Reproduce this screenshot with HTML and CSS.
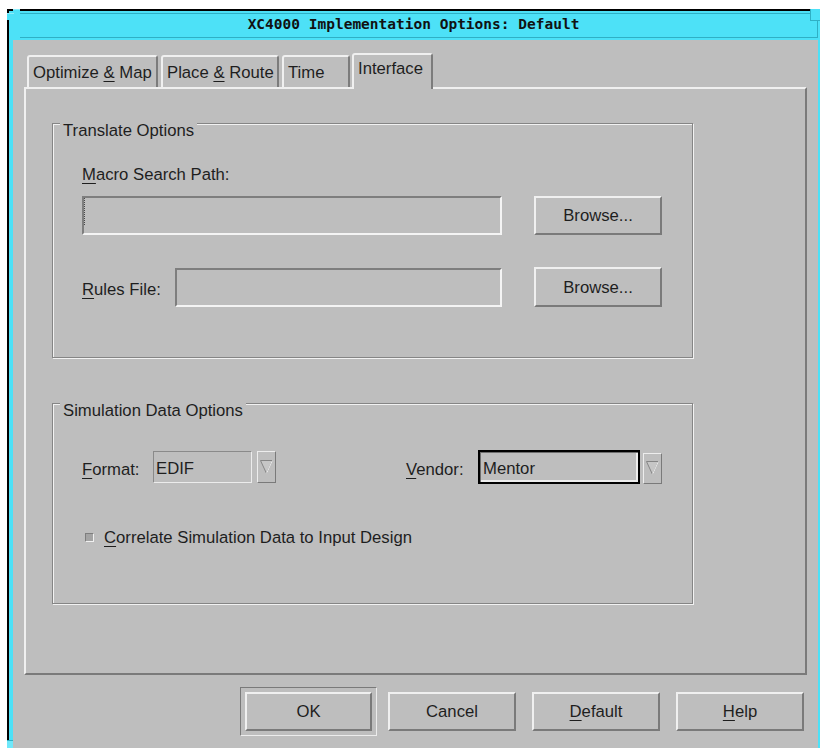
FILE: index.html
```html
<!DOCTYPE html>
<html lang="en">
<head>
<meta charset="utf-8">
<title>XC4000 Implementation Options: Default</title>
<link rel="stylesheet" href="styles.css">
</head>
<body>
<div class="window">
  <span class="corner corner-tl"></span>
  <span class="corner corner-tr"></span>
  <span class="corner corner-bl"></span>

  <div class="titlebar">
    <div class="caption">XC4000 Implementation Options: Default</div>
  </div>

  <div class="client">
    <div class="notebook">
      <div class="tabs">
        <div class="tab tab-opt">Optimize <u>&amp;</u> Map</div>
        <div class="tab tab-par">Place <u>&amp;</u> Route</div>
        <div class="tab tab-time">Time</div>
        <div class="tab tab-if active">Interface</div>
      </div>

      <div class="page">
        <div class="group group-translate">
          <div class="group-title">Translate Options</div>
          <div class="macro-label"><u>M</u>acro Search Path:</div>
          <div class="row row-macro">
            <div class="field field-macro"><span class="cursor"></span></div>
            <div class="button browse">Browse...</div>
          </div>
          <div class="row row-rules">
            <div class="rules-label"><u>R</u>ules File:</div>
            <div class="field field-rules"></div>
            <div class="button browse browse-rules">Browse...</div>
          </div>
        </div>

        <div class="group group-sim">
          <div class="group-title">Simulation Data Options</div>
          <div class="row row-format">
            <div class="combo">
              <div class="combo-label format-label"><u>F</u>ormat:</div>
              <div class="combo-field format-field">EDIF</div>
              <div class="arrow-btn format-arrow">
                <svg width="13" height="14" viewBox="0 0 13 14"><polygon points="0.5,0.5 12.5,0.5 6.5,13.5" fill="#c6c6c6" stroke="#858585"/><polyline points="12.5,0.5 6.5,13.5" fill="none" stroke="#efefef"/></svg>
              </div>
            </div>
            <div class="combo">
              <div class="combo-label vendor-label"><u>V</u>endor:</div>
              <div class="combo-field vendor-field">Mentor</div>
              <div class="arrow-btn vendor-arrow">
                <svg width="13" height="14" viewBox="0 0 13 14"><polygon points="0.5,0.5 12.5,0.5 6.5,13.5" fill="#c6c6c6" stroke="#858585"/><polyline points="12.5,0.5 6.5,13.5" fill="none" stroke="#efefef"/></svg>
              </div>
            </div>
          </div>
          <div class="row row-check">
            <span class="check"></span>
            <span class="check-label"><u>C</u>orrelate Simulation Data to Input Design</span>
          </div>
        </div>
      </div>
    </div>

    <div class="actions">
      <div class="default-ring"><div class="button action ok">OK</div></div>
      <div class="button action">Cancel</div>
      <div class="button action"><span><u>D</u>efault</span></div>
      <div class="button action"><span><u>H</u>elp</span></div>
    </div>
  </div>
</div>
</body>
</html>
```

FILE: styles.css
```css
* {
  box-sizing: border-box;
}

html,
body {
  margin: 0;
  padding: 0;
}

body {
  width: 820px;
  height: 748px;
  overflow: hidden;
  background: #ffffff;
  font-family: "Liberation Sans", Arial, sans-serif;
  font-size: 16.7px;
  line-height: 19px;
  color: #1e1e1e;
}

u {
  text-decoration: underline;
  text-decoration-thickness: 1px;
  text-underline-offset: 3px;
}

/* ---------- window frame ---------- */
.window {
  position: relative;
  margin: 9px 0 0 7px;
  width: 813px;
  height: 760px;
  background: #4de1f7;
  border-top: 2px solid #000;
  border-left: 2px solid #000;
  display: flex;
  flex-direction: column;
}

.corner {
  position: absolute;
  background: #4de1f7;
}

.corner-tl {
  left: -2px;
  top: -2px;
  width: 13px;
  height: 11px;
  clip-path: polygon(6px 0, 13px 0, 13px 11px, 0 11px, 0 4px, 6px 4px);
  background: linear-gradient(#8cecfb, #8cecfb) 6px 0 / 7px 1px no-repeat,
              linear-gradient(#8cecfb, #8cecfb) 0 4px / 7px 1px no-repeat,
              #4de1f7;
}

.corner-tr {
  right: 0;
  top: -2px;
  width: 10px;
  height: 12px;
  border-left: 1px solid #2fb0c5;
  border-bottom: 1px solid #2fb0c5;
}

.corner-bl {
  left: -2px;
  top: 729px;
  width: 6px;
  height: 24px;
  background: #6fe8fa;
  border-top: 1px solid #2fb0c5;
}

.titlebar {
  flex: none;
  height: 29px;
  padding: 2px 2px 2px 11px;
}

.caption {
  height: 100%;
  border-top: 1px solid #2fb0c5;
  border-bottom: 1px solid #2fb0c5;
  border-right: 1px solid #2fb0c5;
  padding: 0 10px 3px 0;
  display: flex;
  align-items: center;
  justify-content: center;
  font-family: "DejaVu Sans Mono", "Liberation Mono", monospace;
  font-weight: bold;
  font-size: 14.5px;
  color: #111;
  white-space: nowrap;
}

.client {
  flex: none;
  height: 720px;
  margin: 0 2px 0 4px;
  background: #bebebe;
  padding: 13px 11px 0 11px;
}

/* ---------- notebook ---------- */
.tabs {
  position: relative;
  z-index: 1;
  display: flex;
  align-items: flex-end;
  height: 34px;
  padding-left: 3px;
}

.tab {
  height: 32px;
  margin-right: 3px;
  padding: 6px 0 0 4px;
  border: 2px solid;
  border-bottom: none;
  border-color: #f0f0f0 #7c7c7c transparent #f0f0f0;
  border-radius: 3px 3px 0 0;
  background: #bebebe;
  white-space: nowrap;
}

.tab-opt { width: 131px; }
.tab-par { width: 118px; }
.tab-time { width: 68px; margin-right: 2px; }

.tab.active {
  width: 81px;
  height: 36px;
  margin-bottom: -2px;
  padding-top: 4px;
}

.page {
  height: 588px;
  border: 2px solid;
  border-color: #f0f0f0 #7a7a7a #7a7a7a #f0f0f0;
  padding-top: 34px;
}

/* ---------- etched groups ---------- */
.group {
  width: 641px;
  margin-left: 26px;
  border: 1px solid #858585;
  box-shadow: inset 1px 1px 0 #f2f2f2, 1px 1px 0 #f2f2f2;
  padding: 0 30px 0 29px;
}

.group-title {
  width: fit-content;
  margin: -3px 0 0 -22px;
  padding: 0 3px;
  background: #bebebe;
  white-space: nowrap;
}

.group-translate {
  padding-bottom: 50px;
}

.group-sim {
  margin-top: 45px;
  padding-bottom: 56px;
}

.row {
  display: flex;
}

.macro-label {
  margin-top: 25px;
}

.row-macro {
  margin-top: 12px;
  height: 39px;
  gap: 32px;
}

.row-rules {
  margin-top: 32px;
  height: 40px;
  align-items: center;
}

.rules-label {
  width: 93px;
  margin-top: 5px;
}

/* ---------- fields and buttons ---------- */
.field {
  border: 2px solid;
  border-color: #7e7e7e #f4f4f4 #f4f4f4 #7e7e7e;
  background: #bebebe;
}

.field-macro {
  width: 420px;
  height: 39px;
  display: flex;
}

.cursor {
  width: 1px;
  height: 27px;
  border-left: 1px dotted #4a4a4a;
}

.field-rules {
  width: 327px;
  height: 39px;
  align-self: flex-end;
  margin-right: 32px;
}

.button {
  display: flex;
  align-items: center;
  justify-content: center;
  border: 2px solid;
  border-color: #f0f0f0 #7a7a7a #7a7a7a #f0f0f0;
  background: #bebebe;
  white-space: nowrap;
}

.browse {
  width: 128px;
  height: 39px;
}

.browse-rules {
  height: 40px;
}

/* ---------- option menus ---------- */
.row-format {
  margin-top: 30px;
  height: 33px;
  justify-content: space-between;
  align-items: center;
}

.combo {
  display: flex;
  align-items: center;
}

.combo-label {
  margin-top: 6px;
  white-space: nowrap;
}

.format-label { width: 71px; }
.vendor-label { width: 72px; }

.combo-field {
  display: flex;
  align-items: center;
  padding: 3px 0 0 2px;
}

.format-field {
  width: 99px;
  height: 32px;
  border: 1px solid;
  border-color: #8a8a8a #ececec #ececec #8a8a8a;
}

.vendor-field {
  width: 162px;
  height: 34px;
  border: 2px solid #000;
  box-shadow: inset 1px 1px 0 #6e6e6e, inset -2px -2px 0 #ececec;
  padding-left: 3px;
}

.arrow-btn {
  display: flex;
  align-items: center;
  justify-content: center;
  width: 19px;
  border: 1px solid;
  border-color: #ededed #7a7a7a #7a7a7a #ededed;
}

.arrow-btn svg {
  display: block;
}

.format-arrow {
  height: 32px;
  margin-left: 5px;
}

.vendor-arrow {
  height: 31px;
  margin-left: 3px;
  align-self: flex-end;
}

/* ---------- toggle ---------- */
.row-check {
  margin-top: 45px;
  align-items: center;
  padding-left: 3px;
}

.check {
  width: 9px;
  height: 9px;
  margin-right: 10px;
  border: 1px solid;
  border-color: #7e7e7e #f0f0f0 #f0f0f0 #7e7e7e;
  background: #a4a4a4;
}

/* ---------- dialog actions ---------- */
.actions {
  margin-top: 12px;
  height: 49px;
  display: flex;
  justify-content: flex-end;
  align-items: center;
  gap: 16px;
  padding-right: 3px;
}

.default-ring {
  width: 137px;
  height: 49px;
  margin-right: -5px;
  padding: 4px;
  border: 1px solid;
  border-color: #7a7a7a #ececec #ececec #7a7a7a;
}

.action {
  width: 128px;
  height: 39px;
}

.action.ok {
  width: 127px;
}
```
